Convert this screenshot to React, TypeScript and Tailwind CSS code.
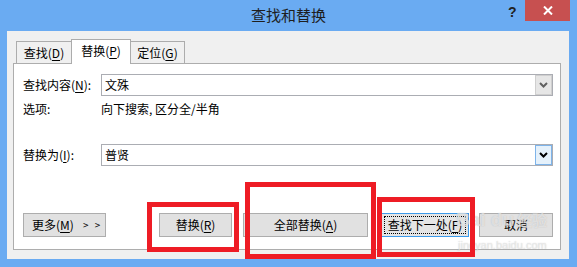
import React from "react";

function Chevron({ color }: { color: string }) {
  return (
    <svg width="9" height="6" viewBox="0 0 9 6">
      <polyline points="1,1 4.5,4.5 8,1" fill="none" stroke={color} strokeWidth="2" />
    </svg>
  );
}

function U({ children }: { children: React.ReactNode }) {
  return <span className="underline underline-offset-[2px] decoration-1">{children}</span>;
}

function Combo({ value, active }: { value: string; active?: boolean }) {
  return (
    <div className="flex-1 h-[22px] border border-[#abadb3] bg-white flex items-stretch">
      <div className="flex-1 pl-[3px] flex items-center text-[12px] leading-[14px] text-black">{value}</div>
      {active ? (
        <div className="w-[17px] bg-[#e5f1fb] border border-[#7eb4ea] flex items-center justify-center">
          <Chevron color="#000" />
        </div>
      ) : (
        <div className="w-[17px] bg-[#e6e6e6] border border-[#cfcfcf] flex items-center justify-center">
          <Chevron color="#606060" />
        </div>
      )}
    </div>
  );
}

function Btn({ w, children, focus }: { w: string; children: React.ReactNode; focus?: boolean }) {
  return (
    <div
      className={`${w} h-[24px] shrink-0 border ${
        focus ? "border-[#3c9aea] bg-[#e5e5e5]" : "border-[#adadad] bg-[#e1e1e1]"
      } flex items-center justify-center text-[12px] leading-[14px] text-black relative`}
    >
      {focus && <div className="absolute inset-[2px] border border-dotted border-black" />}
      <span className="relative">{children}</span>
    </div>
  );
}

export default function App() {
  return (
    <div className="relative w-[577px] h-[267px] bg-[#6aabf2] flex flex-col overflow-hidden [font-family:'Noto_Sans_CJK_SC','Noto_Sans',sans-serif]">
      {/* title bar */}
      <div className="h-[31px] flex items-start shrink-0">
        <div className="w-[67px]" />
        <div className="flex-1 text-center pt-[5px] text-[15px] leading-[20px] text-[#1e1e1e]">查找和替换</div>
        <div className="w-[67px] flex items-start">
          <div className="w-[15px] pt-[4px] -ml-[2px] mr-[2px] text-left text-[14px] leading-[16px] font-bold text-[#222] [font-family:'Liberation_Sans',sans-serif]">?</div>
          <div className="w-[45px] h-[21px] bg-[#c75050] flex items-center justify-center">
            <svg width="10" height="9" viewBox="0 0 10 9">
              <path d="M1 0.5 L9 8.5 M9 0.5 L1 8.5" stroke="#fff" strokeWidth="2" />
            </svg>
          </div>
        </div>
      </div>

      {/* body */}
      <div className="ml-[7px] mr-[8px] h-[228px] bg-[#f0f0f0] flex flex-col pt-[8px]">
        {/* tabs */}
        <div className="h-[24px] flex items-end pl-[9px] relative z-10">
          <div className="w-[56px] h-[22px] border border-b-0 border-[#acacac] bg-[#f0f0f0] flex items-center justify-center text-[12px] leading-[14px] text-black">
            查找(<U>D</U>)
          </div>
          <div className="w-[60px] h-[25px] -ml-[1px] -mb-[1px] border border-b-0 border-[#acacac] bg-white flex items-center justify-center pb-[2px] text-[12px] leading-[14px] text-black">
            替换(<U>P</U>)
          </div>
          <div className="w-[55px] h-[22px] -ml-[1px] border border-b-0 border-[#acacac] bg-[#f0f0f0] flex items-center justify-center text-[12px] leading-[14px] text-black">
            定位(<U>G</U>)
          </div>
        </div>

        {/* panel */}
        <div className="ml-[6px] mr-[8px] h-[187px] border border-[#adadad] bg-white flex flex-col pl-[9px] pr-[7px]">
          <div className="mt-[10px] flex items-center">
            <div className="w-[78px] text-[12px] leading-[14px] text-black">查找内容(<U>N</U>):</div>
            <Combo value="文殊" />
          </div>
          <div className="mt-[6px] flex items-center h-[14px]">
            <div className="w-[78px] text-[12px] leading-[14px] text-black">选项:</div>
            <div className="text-[12px] leading-[14px] text-black">向下搜索, 区分全/半角</div>
          </div>
          <div className="mt-[28px] flex items-center">
            <div className="w-[78px] text-[12px] leading-[14px] text-black">替换为(<U>I</U>):</div>
            <Combo value="普贤" active />
          </div>
          <div className="mt-[47px] flex items-center">
            <div className="w-[83px] h-[24px] shrink-0 border border-[#adadad] bg-[#e1e1e1] flex items-center pl-[8px] text-[12px] leading-[14px] text-black">
              更多(<U>M</U>)<span className="ml-[9px] text-[10px] tracking-[2px]">&gt; &gt;</span>
            </div>
            <div className="ml-[53px]">
              <Btn w="w-[73px]">替换(<U>R</U>)</Btn>
            </div>
            <div className="ml-[11px]">
              <Btn w="w-[125px]">全部替换(<U>A</U>)</Btn>
            </div>
            <div className="ml-[13px]">
              <Btn w="w-[88px]" focus>查找下一处(<U>F</U>)</Btn>
            </div>
            <div className="ml-[10px]">
              <Btn w="w-[74px]">取消</Btn>
            </div>
          </div>
        </div>
      </div>

      {/* watermark */}
      <div className="absolute left-[456px] top-[209px] flex items-baseline gap-[3px] text-white/55 [text-shadow:0_0_1px_rgba(140,140,140,0.55)] pointer-events-none">
        <span className="text-[19px] leading-[22px] font-bold [font-family:'Liberation_Sans',sans-serif]">Bai du</span>
        <span className="text-[15px] leading-[22px] font-bold">经验</span>
      </div>
      <div className="absolute left-[458px] top-[239px] text-[11px] leading-[12px] text-white/55 [text-shadow:0_0_1px_rgba(140,140,140,0.55)] pointer-events-none [font-family:'Liberation_Sans',sans-serif]">
        jingyan.baidu.com
      </div>

      {/* red highlight boxes */}
      <div className="absolute left-[147px] top-[202px] w-[92px] h-[50px] border-[5px] border-[#ee1c25] pointer-events-none" />
      <div className="absolute left-[245px] top-[182px] w-[131px] h-[77px] border-[5px] border-[#ee1c25] pointer-events-none" />
      <div className="absolute left-[377px] top-[197px] w-[98px] h-[60px] border-[5px] border-[#ee1c25] pointer-events-none" />
    </div>
  );
}
